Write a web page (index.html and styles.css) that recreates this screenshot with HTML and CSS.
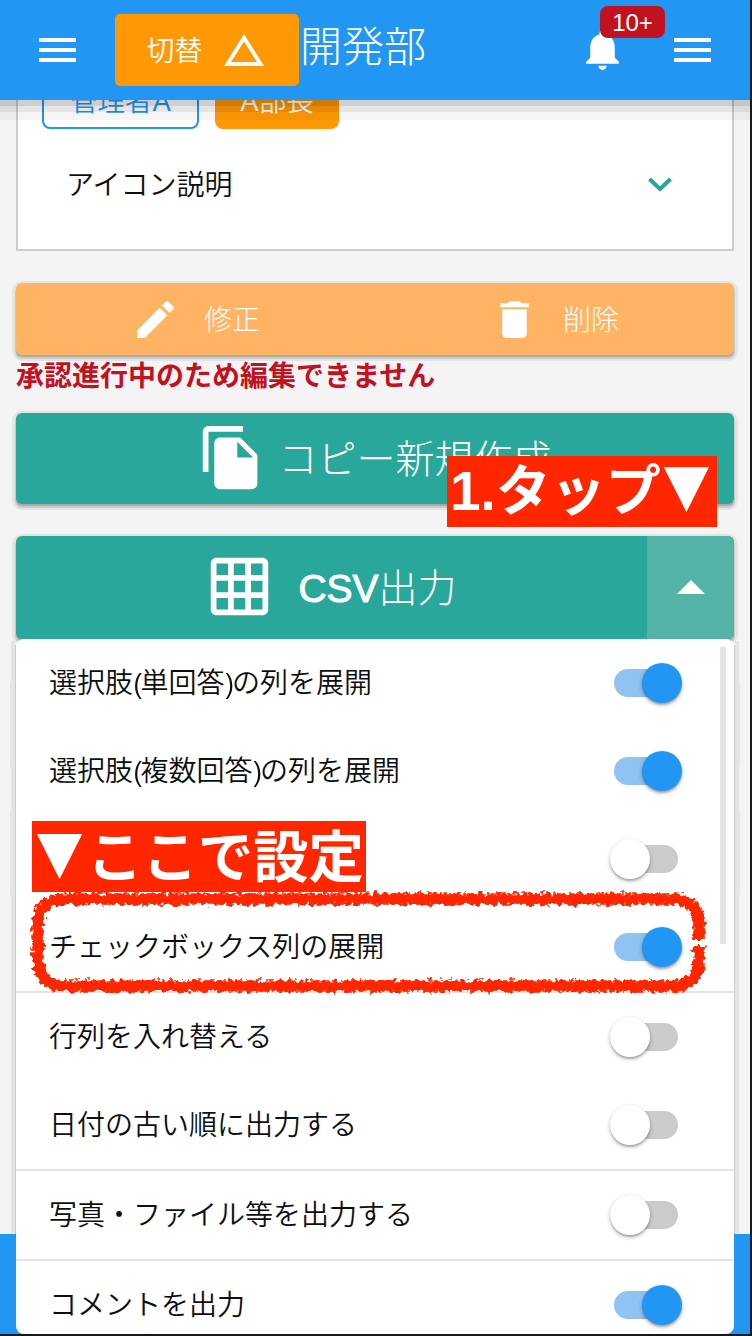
FILE: index.html
```html
<!DOCTYPE html>
<html lang="ja">
<head>
<meta charset="utf-8">
<title>開発部</title>
<link rel="stylesheet" href="styles.css">
</head>
<body>
<div class="screen">
  <header class="header">
    <svg class="burger" viewBox="0 0 37 24"><path d="M0 0h37v4H0zM0 10h37v4H0zM0 20h37v4H0z"/></svg>
    <button class="switch"><span>切替</span><svg class="tri" viewBox="0 0 40 32"><path fill-rule="evenodd" d="M20 0L40 32H0zM20 7.500L7 28H33z"/></svg></button>
    <h1 class="title">開発部</h1>
    <div class="bell">
      <svg viewBox="0 0 24 24"><path d="M12 22c1.100 0 2-.9 2-2h-4c0 1.100.89 2 2 2zm6-6v-5c0-3.070-1.640-5.640-4.500-6.320V4c0-.83-.67-1.500-1.500-1.500s-1.500.67-1.500 1.500v.68C7.630 5.360 6 7.920 6 11v5l-2 2v1h16v-1l-2-2z"/></svg>
      <span class="badge">10+</span>
    </div>
    <svg class="burger" viewBox="0 0 37 24"><path d="M0 0h37v4H0zM0 10h37v4H0zM0 20h37v4H0z"/></svg>
  </header>

  <main class="content">
    <section class="card">
      <div class="chips"><span class="chip outline">管理者A</span><span class="chip solid">A部長</span></div>
      <div class="accordion"><span>アイコン説明</span><svg class="chevron" viewBox="0 0 24 14"><path d="M1.500 2L12 12L22.500 2"/></svg></div>
    </section>

    <div class="actions raised">
      <button class="action"><svg viewBox="0 0 24 24"><path d="M3 17.250V21h3.750L17.810 9.940l-3.750-3.750L3 17.250zM20.710 7.040a1 1 0 0 0 0-1.410l-2.340-2.340a1 1 0 0 0-1.410 0l-1.830 1.830 3.750 3.750 1.830-1.830z"/></svg><span>修正</span></button>
      <button class="action"><svg viewBox="0 0 24 24"><path d="M6 19c0 1.100.9 2 2 2h8c1.100 0 2-.9 2-2V7H6v12zM19 4h-3.500l-1-1h-5l-1 1H5v2h14V4z"/></svg><span>削除</span></button>
    </div>
    <p class="warning">承認進行中のため編集できません</p>

    <button class="big copy raised"><svg viewBox="0 0 24 24"><path d="M16 1H4c-1.100 0-2 .9-2 2v14h2V3h12V1zm-1 4l6 6v10c0 1.100-.9 2-2 2H7.990C6.890 23 6 22.100 6 21l.010-14c0-1.100.89-2 1.990-2h7zm-1 7h5.500L14 6.500V12z"/></svg><span>コピー新規作成</span></button>

    <div class="dropdown">
      <div class="csv raised">
        <button class="big csv-main"><svg viewBox="0 0 24 24"><path d="M20 2H4c-1.100 0-2 .9-2 2v16c0 1.100.9 2 2 2h16c1.100 0 2-.9 2-2V4c0-1.100-.9-2-2-2zM8 20H4v-4h4v4zm0-6H4v-4h4v4zm0-6H4V4h4v4zm6 12h-4v-4h4v4zm0-6h-4v-4h4v4zm0-6h-4V4h4v4zm6 12h-4v-4h4v4zm0-6h-4v-4h4v4zm0-6h-4V4h4v4z"/></svg><span><b class="latin">CSV</b>出力</span></button>
        <button class="csv-toggle"><svg viewBox="0 0 28 14"><path d="M0 14L14 0L28 14z"/></svg></button>
      </div>
      <div class="menu">
        <label class="row"><span>選択肢<b class="paren">(</b>単回答<b class="paren">)</b>の列を展開</span><i class="toggle on"></i></label>
        <label class="row"><span>選択肢<b class="paren">(</b>複数回答<b class="paren">)</b>の列を展開</span><i class="toggle on"></i></label>
        <label class="row"><span></span><i class="toggle"></i></label>
        <label class="row"><span>チェックボックス列の展開</span><i class="toggle on"></i></label>
        <label class="row line"><span>行列を入れ替える</span><i class="toggle"></i></label>
        <label class="row"><span>日付の古い順に出力する</span><i class="toggle"></i></label>
        <label class="row line"><span>写真・ファイル等を出力する</span><i class="toggle"></i></label>
        <label class="row line"><span>コメントを出力</span><i class="toggle on"></i></label>
        <div class="scrollbar"></div>
      </div>
    </div>
    <div class="stub"></div>
    <div class="stub"></div>
  </main>
  <footer class="footer"></footer>

  <div class="note note-tap">1.タップ<span class="mark">▼</span></div>
  <div class="note note-set"><span class="mark">▼</span>ここで設定</div>
  <svg class="ring" viewBox="0 0 690 116">
    <defs><filter id="rough" x="0" y="0" width="690" height="116" filterUnits="userSpaceOnUse">
      <feTurbulence type="fractalNoise" baseFrequency="0.22" numOctaves="2" seed="4" result="n"/>
      <feDisplacementMap in="SourceGraphic" in2="n" scale="10" xChannelSelector="R" yChannelSelector="G"/>
    </filter></defs>
    <path filter="url(#rough)" d="M675 61V76Q673 101 648 101H42Q15 101 14 75V40Q14 14 42 14H648Q675 14 675 42V55"/>
  </svg>
</div>
</body>
</html>
```

FILE: styles.css
```css
* { box-sizing: border-box; }
body {
  margin: 0;
  background: #17191b;
  font-family: "Liberation Sans", "Noto Sans CJK JP", sans-serif;
  font-size: 28px;
  font-weight: 300;
  color: #0c0e0f;
}
button { border: 0; padding: 0; margin: 0; background: none; font: inherit; color: #fff; }
svg { display: block; fill: #fff; flex: none; }
.screen {
  position: relative;
  width: 750px;
  height: 1334px;
  overflow: hidden;
  background: #f4f4f4;
  display: flex;
  flex-direction: column;
}
.header {
  position: relative;
  z-index: 2;
  flex: none;
  height: 100px;
  padding: 0 39px;
  display: flex;
  align-items: center;
  background: #2196f3;
  color: #fff;
}
.header::after {
  content: "";
  position: absolute;
  z-index: -1;
  left: 0;
  right: 0;
  top: 100px;
  height: 20px;
  background: linear-gradient(rgba(0,0,0,.19) 6px, rgba(0,0,0,.1) 6px, rgba(0,0,0,.1) 12px, rgba(0,0,0,.04) 12px);
}
.burger { width: 37px; height: 24px; }
.switch {
  width: 184px;
  height: 72px;
  margin-left: 39px;
  border-radius: 5px;
  background: #ff9805;
  display: flex;
  align-items: center;
  justify-content: center;
  gap: 21px;
}
.switch span { font-weight: 350; }
.switch span, .action span { transform: translateY(-1px); }
.switch { padding-right: 4px; }
.tri { width: 40px; height: 32px; }
.title {
  flex: 1;
  margin: 0 0 5px 1px;
  font-size: 42px;
  font-weight: 300;
  line-height: 60px;
}
.bell { position: relative; width: 49px; height: 49px; margin-right: 47px; }
.bell svg { width: 49px; height: 49px; transform: translateY(-1px); }
.badge {
  position: absolute;
  left: 22px;
  top: -20px;
  width: 65px;
  height: 32px;
  border-radius: 8px;
  background: #c1121f;
  text-align: center;
  font-size: 24px;
  line-height: 34px;
}
.content { flex: 1; min-height: 0; padding: 0 16px; }
.card {
  height: 171px;
  margin: -20px 0 0;
  border: 2px solid #ccc;
  border-top: 0;
  background: #fff;
}
.chips { display: flex; gap: 16px; padding-left: 24px; transform: translateY(-6px); }
.chip {
  height: 55px;
  border-radius: 8px;
  font-size: 27.500px;
  font-weight: 350;
  line-height: 52px;
  text-align: center;
}
.outline { width: 157px; border: 2px solid #2196f3; color: #2196f3; }
.solid { width: 124px; background: #ff9805; color: #fff; line-height: 56px; }
.accordion {
  display: flex;
  justify-content: space-between;
  align-items: center;
  height: 60px;
  margin-top: 18px;
  padding: 0 60px 0 48px;
  font-weight: 350;
}
.accordion svg { transform: translateY(1px); }
.chevron { width: 24px; height: 14px; fill: none; stroke: #26a69a; stroke-width: 4; }
.raised { border-radius: 6px; box-shadow: 0 2px 1px #a9a9a9, 0 3px 0 1px #ccc, 0 2px 0 4px #e4e4e3; }
.actions { display: flex; height: 72px; margin-top: 32px; background: #ffb463; }
.action { flex: 1; display: flex; align-items: center; justify-content: center; gap: 24px; }
.action svg { width: 49px; height: 49px; }
.warning { margin: 0; height: 58px; line-height: 44px; font-weight: 700; color: #c1121f; }
.big { display: flex; align-items: center; justify-content: center; font-size: 39px; }
.big svg { width: 69px; height: 69px; transform: translate(-1px, -1px); }
.big span { transform: translateY(-3px); }
.copy { width: 100%; height: 91px; gap: 11px; background: #28a79a; }
.dropdown { position: relative; z-index: 1; margin-top: 32px; }
.csv { display: flex; height: 103px; overflow: hidden; background: #28a79a; }
.csv-main { flex: 1; gap: 23px; }
.latin { font-weight: 400; -webkit-text-stroke: 1px #fff; }
.csv-toggle { width: 87px; display: flex; align-items: center; justify-content: center; background: #54b2a7; }
.csv-toggle svg { width: 28px; height: 14px; transform: translateY(-1px); }
.menu {
  position: absolute;
  z-index: 1;
  top: 103px;
  left: 0;
  width: 100%;
  height: 695px;
  border-radius: 8px;
  background: #fff;
}
.menu::before {
  content: "";
  position: absolute;
  z-index: -1;
  top: 2px;
  left: -5px;
  right: -5px;
  height: 593px;
  border: solid #e4e4e3;
  border-width: 0 4px;
}
.menu::after {
  content: "";
  position: absolute;
  z-index: -1;
  top: 6px;
  left: -1px;
  right: -1px;
  height: 589px;
  border: solid #cbcccb;
  border-width: 0 1px;
}
.row {
  display: flex;
  align-items: center;
  justify-content: space-between;
  height: 88px;
  padding: 0 56px 0 33px;
  font-weight: 350;
}
.row span { transform: translateY(-2px); }
.paren { display: inline-block; width: 7.500px; font-weight: 400; transform: scaleX(.9); }
.line { height: 90px; border-top: 2px solid #e4e4e4; }
.toggle { position: relative; width: 64px; height: 28px; border-radius: 14px; background: #cacccb; }
.toggle::after {
  content: "";
  position: absolute;
  top: -6px;
  left: -4px;
  width: 40px;
  height: 40px;
  border-radius: 50%;
  background: #fff;
  box-shadow: 0 2px 2px rgba(0,0,0,.3), 0 2px 2px 3px rgba(0,0,0,.05);
}
.toggle.on { background: linear-gradient(90deg, #90c3f1 44px, transparent 44px); }
.toggle.on::after { left: 28px; background: #2196f3; }
.scrollbar { position: absolute; right: 8px; top: 8px; width: 6px; height: 297px; background: #e4e4e3; }
.stub {
  height: 91px;
  margin-top: 38px;
  border-radius: 6px;
  background: #28a79a;
  box-shadow: 0 0 0 1px #aaa, 0 2px 0 3px #ccc, 0 2px 0 6px #e4e4e3;
}
.footer { flex: none; height: 100px; background: #2196f3; }
.note {
  position: absolute;
  z-index: 3;
  height: 71px;
  background: #ff2600;
  color: #fff;
  font-size: 56px;
  font-weight: 700;
  line-height: 71px;
  white-space: nowrap;
}
.note-tap { left: 447px; top: 456px; width: 270px; padding-left: 3px; font-size: 55px; }
.note-set { left: 32px; top: 821px; width: 334px; font-size: 55.300px; line-height: 74px; }
.mark {
  display: inline-block;
  font-family: "Noto Sans CJK JP", sans-serif;
  line-height: 1;
  transform: translateY(-2px) scaleX(.87);
}
.note-tap .mark { margin-left: -2px; }
.ring { position: absolute; z-index: 3; left: 24px; top: 885px; width: 690px; height: 116px; }
.ring path { fill: none; stroke: #ff2600; stroke-width: 11.500; }
```
